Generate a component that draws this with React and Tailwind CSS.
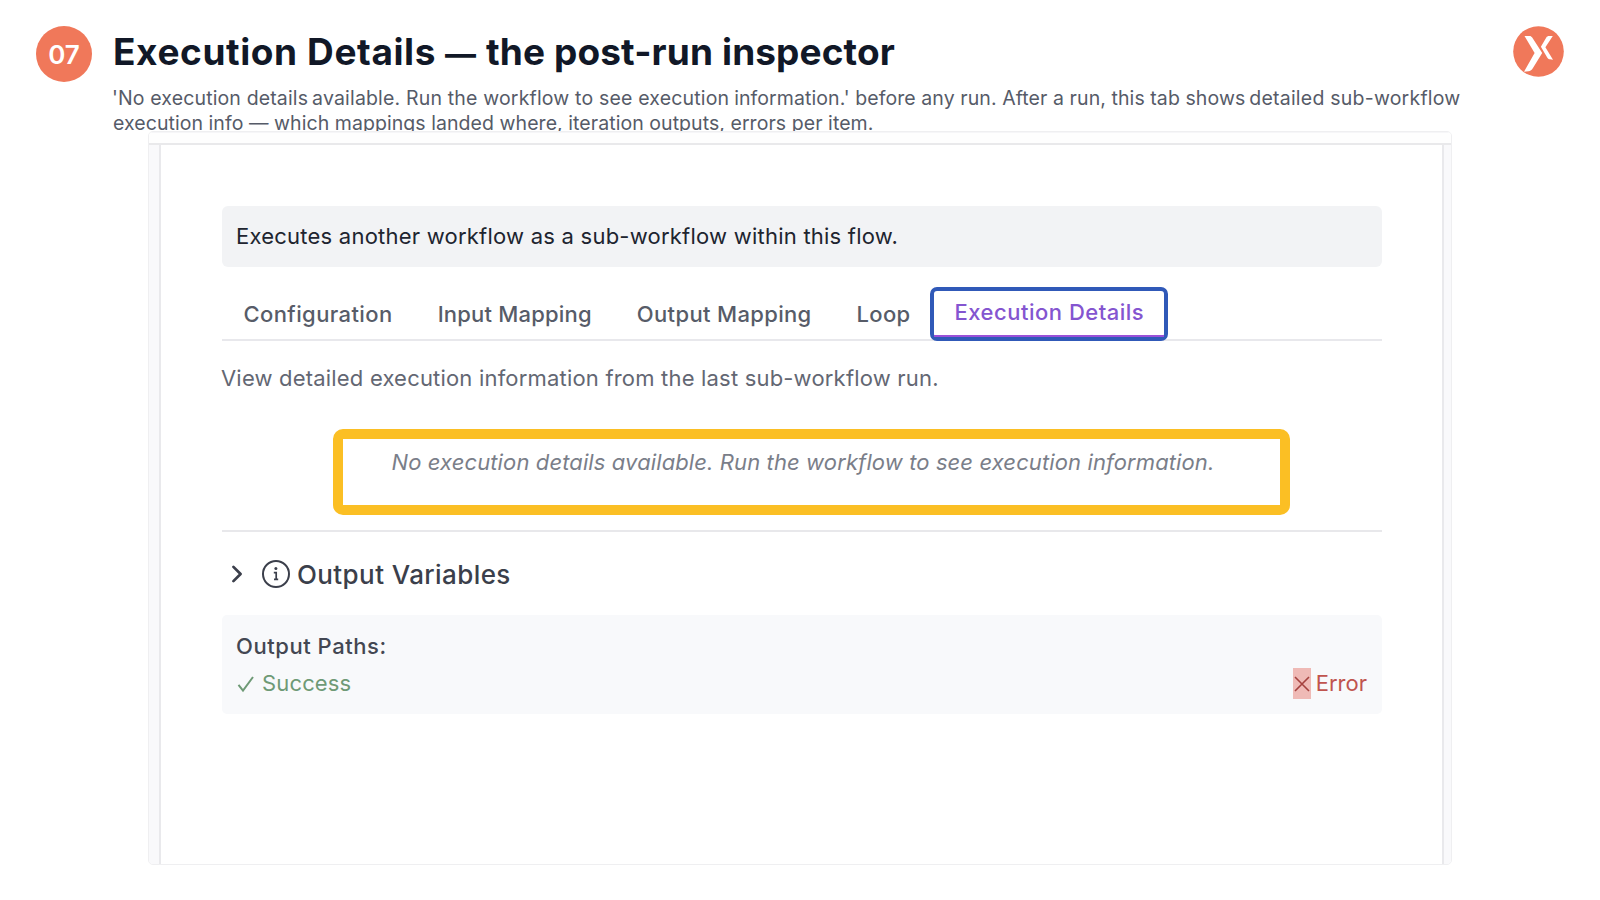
import { ChevronRight } from "lucide-react"

const tabs = [
  { label: "Configuration", style: "ml-[21.5px] tracking-[0.4px]" },
  { label: "Input Mapping", style: "ml-[45px] tracking-[0.2px]" },
  { label: "Output Mapping", style: "ml-[45px] tracking-[0.34px]" },
  { label: "Loop", style: "ml-[45px] tracking-[0.3px]" },
]

function BrandLogo() {
  return (
    <svg className="mt-[26px] h-[51px] w-[51px]" viewBox="0 0 51 51">
      <circle cx="25.5" cy="25.5" r="25.3" fill="#f0785a" />
      <path
        d="M11.5 10H16.6C17.7 10 18.5 10.6 19.2 11.6L29.2 27L19.8 42.2C18.7 43.9 17.5 44.9 15.5 45.2L11 45.7L21.6 27Z"
        fill="#fff"
      />
      <path
        d="M39.8 10H36C34.8 10 34 10.5 33.3 11.5L27.9 20.8L34.2 31.4C34.9 32.6 35.6 33.1 36.9 33.3L40 33.7L32.4 21.3Z"
        fill="#fff"
      />
    </svg>
  )
}

function InfoIcon() {
  return (
    <svg className="ml-[11px] h-[30px] w-[30px]" viewBox="0 0 30 30" fill="none" stroke="#3b3f4b">
      <circle cx="15" cy="15" r="13" strokeWidth="2" />
      <path d="M12.8 13.6H15.2V20.4M13 20.4H17.2" strokeWidth="1.7" />
      <circle cx="14.9" cy="9.6" r="1.5" fill="#3b3f4b" stroke="none" />
    </svg>
  )
}

function SlideHeader() {
  return (
    <header className="flex h-[131px] items-start pl-9 pr-9">
      <div className="mt-[26px] flex h-[56px] w-[56px] shrink-0 items-center justify-center rounded-full bg-[#f0785a] text-[26px] font-semibold text-white">
        07
      </div>
      <div className="ml-[21px] mt-[32px] w-[1400px] shrink-0 whitespace-nowrap">
        <h1 className="flex h-[40px] items-baseline text-[37px] font-bold leading-[40px] text-[#111827]">
          <span className="tracking-[0.6px]">Execution Details</span>
          <span className="ml-[9px] text-[31px]">—</span>
          <span className="ml-[10px] tracking-[0.12px]">the post-run inspector</span>
        </h1>
        <div className="mt-[14px] text-[19.5px] leading-[25px] text-[#565b68]">
          <p className="-ml-[1px] flex">
            <span className="tracking-[0.14px]">'No execution details</span>
            <span className="ml-[4px] tracking-[0.17px]">available. Run the workflow to see execution</span>
            <span className="ml-[5px] tracking-[0.08px]">information.' before any run. After a run, this tab shows</span>
            <span className="ml-[4px] tracking-[0.22px]">detailed sub-workflow</span>
          </p>
          <p className="tracking-[0.06px]">
            execution info — which mappings landed where, iteration outputs, errors per item.
          </p>
        </div>
      </div>
      <BrandLogo />
    </header>
  )
}

function TabBar() {
  return (
    <div className="mt-[20px] flex h-[54px] items-center border-b-2 border-[#e8e8ec] text-[22px] font-medium text-[#575c68]">
      {tabs.map((tab) => (
        <span key={tab.label} className={`pt-[2px] ${tab.style}`}>{tab.label}</span>
      ))}
      <div className="-mb-[2px] ml-[20px] h-[54px] w-[238px] rounded-[7px] border-4 border-[#3059b8] bg-white">
        <div className="flex h-full items-center justify-center border-b-2 border-[#9a50d8] pb-[2px] tracking-[0.5px] text-[#8455d0]">
          Execution Details
        </div>
      </div>
    </div>
  )
}

function OutputPaths() {
  return (
    <div className="mt-[21px] h-[99px] rounded-[5px] bg-[#f8f9fb] px-[15px] pt-[17px] text-[22px]">
      <div className="-ml-[1px] h-[28px] font-medium leading-[28px] tracking-[0.55px] text-[#434752]">Output Paths:</div>
      <div className="mt-[8px] flex h-[31px] items-center justify-between">
        <div className="flex items-center text-[#6e9a76]">
          <svg className="h-[18px] w-[18px]" viewBox="0 0 18 18" fill="none" stroke="currentColor" strokeWidth="2">
            <path d="M1.5 9.8L6 15.6L16 2" />
          </svg>
          <span className="ml-[7px] tracking-[0.15px]">Success</span>
        </div>
        <div className="flex items-center text-[#c0544e]">
          <span className="flex h-[31px] w-[18px] items-center justify-center bg-[#efbab6]">
            <svg className="h-[16px] w-[16px]" viewBox="0 0 16 16" stroke="#a5423f" strokeWidth="1.6">
              <path d="M1 1L15 15M15 1L1 15" />
            </svg>
          </span>
          <span className="ml-[5px]">Error</span>
        </div>
      </div>
    </div>
  )
}

export default function App() {
  return (
    <div className="h-[900px] w-[1600px] overflow-hidden bg-white font-['Inter',sans-serif]">
      <SlideHeader />
      <main className="relative ml-[148px] flex h-[734px] w-[1304px] flex-col overflow-hidden rounded-[5px] border border-[#efeff1] bg-white">
        <div className="h-[13px] shrink-0 border-b-2 border-t border-[#e9e9eb] border-t-[#f6f6f8] bg-[#fefefe]" />
        <div className="flex flex-1">
          <div className="w-[12px] border-r-2 border-[#e9e9ec] bg-[#f9f9fb]" />
          <div className="flex-1 pl-[61px] pr-[60px] pt-[61px]">
            <div className="flex h-[61px] items-center rounded-[6px] bg-[#f2f3f5] pl-[14px] text-[22px] tracking-[0.23px] text-[#20242f]">
              Executes another workflow as a sub-workflow within this flow.
            </div>

            <TabBar />

            <p className="-ml-[1px] mt-[23px] h-[28px] whitespace-nowrap text-[22px] leading-[28px] tracking-[0.19px] text-[#636773]">
              View detailed execution information from the last sub-workflow run.
            </p>

            {/* Highlighted empty state */}
            <div className="ml-[110.5px] mt-[37px] h-[86px] w-[957px] whitespace-nowrap rounded-[10px] border-[10px] border-[#fbbf24] pl-[49px] pt-[9px] text-[22px] italic leading-[28px] tracking-[0.11px] text-[#7a7e89]">
              No execution details available. Run the workflow to see execution information.
            </div>

            <div className="mt-[15px] h-[2px] bg-[#e8e8eb]" />

            <div className="mt-[22px] flex h-[40px] items-center text-[26px] font-medium tracking-[0.4px] text-[#3b3f4b]">
              <ChevronRight className="ml-[2px] h-[32px] w-[26px] scale-110" strokeWidth={2.3} />
              <InfoIcon />
              <span className="ml-[6px] pt-[1px]">Output Variables</span>
            </div>

            <OutputPaths />
          </div>
          <div className="w-[9px] border-l-2 border-[#e9e9ec] bg-[#f9f9fb]" />
        </div>
      </main>
    </div>
  )
}
